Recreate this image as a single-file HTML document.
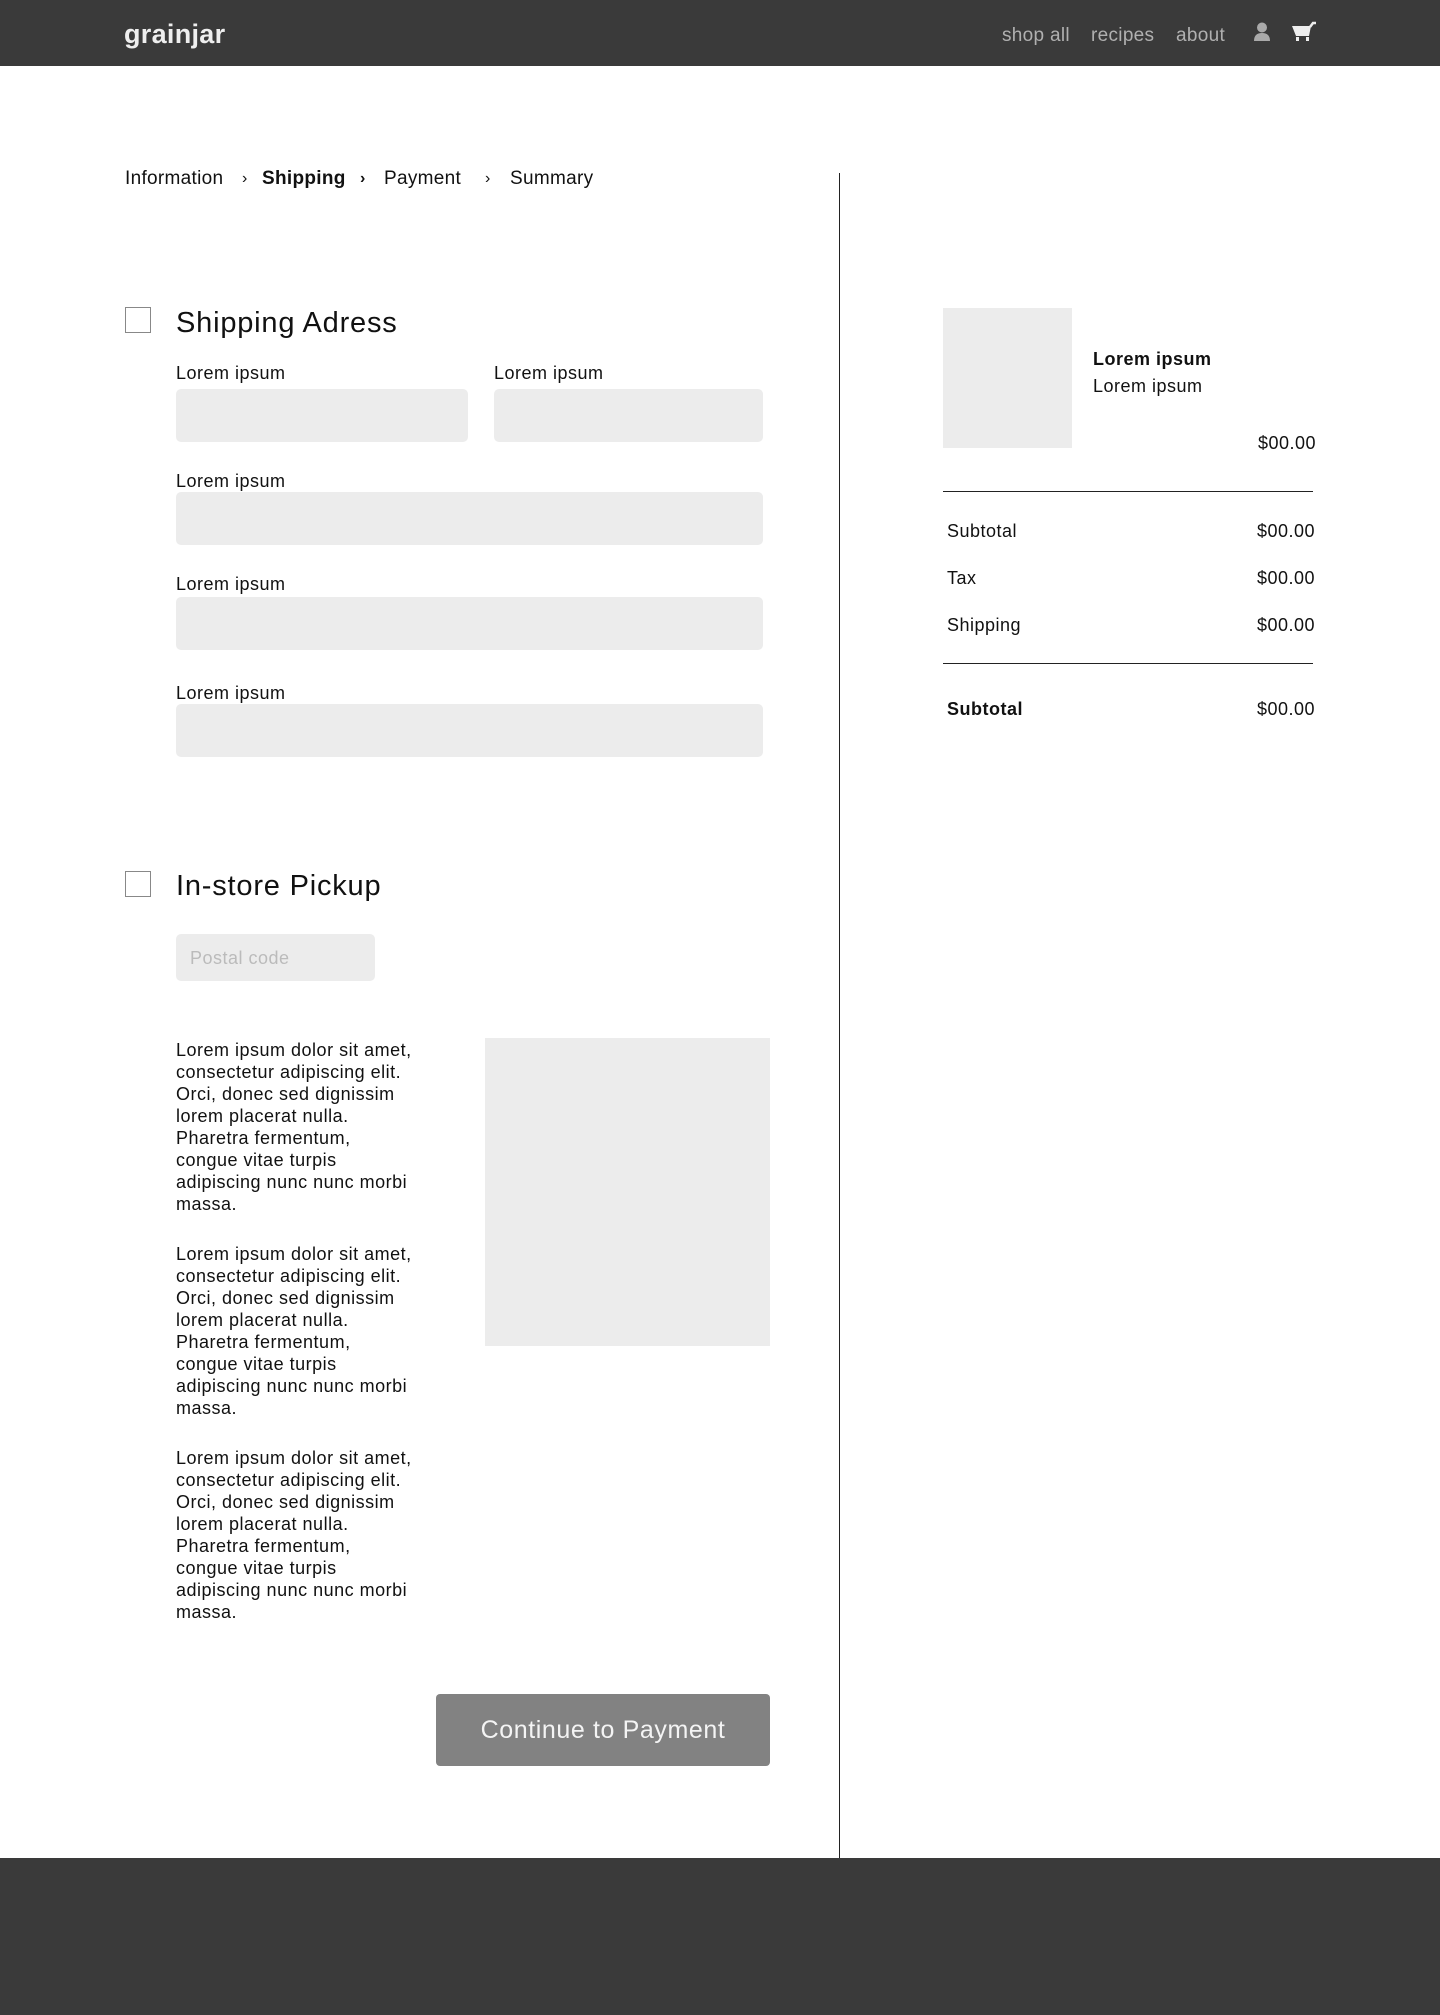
<!DOCTYPE html>
<html><head><meta charset="utf-8"><style>
*{margin:0;padding:0;box-sizing:border-box}
body{width:1440px;height:2015px;position:relative;background:#fff;font-family:"Liberation Sans",sans-serif;color:#111;overflow:hidden}
.a{position:absolute;white-space:nowrap}
.hdr{position:absolute;left:0;top:0;width:1440px;height:66px;background:#3a3a3a}
.nav{color:#b0b0b0;font-size:19px;top:25px;letter-spacing:0.3px}
.inp{position:absolute;background:#ececec;border-radius:5px}
.lbl{font-size:18px;letter-spacing:0.5px}
.cb{position:absolute;width:26px;height:26px;border:1.5px solid #888;background:#fff}
.h2{font-size:29px;color:#111;letter-spacing:0.8px}
.p{position:absolute;left:176px;width:300px;font-size:18px;line-height:22px;white-space:nowrap;letter-spacing:0.5px}
.r{font-size:18px;letter-spacing:0.5px}
.bc{font-size:19px;top:168px;letter-spacing:0.3px}
.ch{font-size:16px;top:170px}
</style></head><body>
<div class="hdr"></div>
<div class="a" style="left:124px;top:19px;color:#eee;font-size:27px;font-weight:bold;letter-spacing:0.3px">grainjar</div>
<div class="a nav" style="left:1002px">shop all</div>
<div class="a nav" style="left:1091px">recipes</div>
<div class="a nav" style="left:1176px">about</div>
<svg class="a" style="left:1253px;top:22px" width="18" height="20" viewBox="0 0 18 20"><circle cx="9" cy="5.5" r="5" fill="#aaa"/><path d="M1 19 Q1 11 9 11 Q17 11 17 19Z" fill="#aaa"/></svg>
<svg class="a" style="left:1291px;top:21px" width="26" height="22" viewBox="0 0 26 22"><path d="M1 5 H20 L18 15 H5 Z" fill="#eee"/><path d="M19 6 L22 2 H25" stroke="#eee" stroke-width="2.5" fill="none"/><rect x="5" y="16" width="3" height="4" fill="#eee"/><rect x="15" y="16" width="3" height="4" fill="#eee"/></svg>

<div class="a bc" style="left:125px">Information</div>
<div class="a ch" style="left:242px">›</div>
<div class="a bc" style="left:262px;font-weight:bold">Shipping</div>
<div class="a ch" style="left:360px;font-weight:bold">›</div>
<div class="a bc" style="left:384px">Payment</div>
<div class="a ch" style="left:485px">›</div>
<div class="a bc" style="left:510px">Summary</div>
<div class="a" style="left:839px;top:173px;width:1px;height:1685px;background:#222"></div>

<div class="cb" style="left:125px;top:307px"></div>
<div class="a h2" style="left:176px;top:307px">Shipping Adress</div>
<div class="a lbl" style="left:176px;top:363px">Lorem ipsum</div>
<div class="a lbl" style="left:494px;top:363px">Lorem ipsum</div>
<div class="inp" style="left:176px;top:389px;width:292px;height:53px"></div>
<div class="inp" style="left:494px;top:389px;width:269px;height:53px"></div>
<div class="a lbl" style="left:176px;top:471px">Lorem ipsum</div>
<div class="inp" style="left:176px;top:492px;width:587px;height:53px"></div>
<div class="a lbl" style="left:176px;top:574px">Lorem ipsum</div>
<div class="inp" style="left:176px;top:597px;width:587px;height:53px"></div>
<div class="a lbl" style="left:176px;top:683px">Lorem ipsum</div>
<div class="inp" style="left:176px;top:704px;width:587px;height:53px"></div>

<div class="cb" style="left:125px;top:871px"></div>
<div class="a h2" style="left:176px;top:870px">In-store Pickup</div>
<div class="inp" style="left:176px;top:934px;width:199px;height:47px"></div>
<div class="a" style="left:190px;top:948px;font-size:18px;color:#bbb;letter-spacing:0.5px">Postal code</div>

<div class="p" style="top:1039px">Lorem ipsum dolor sit amet,<br>consectetur adipiscing elit.<br>Orci, donec sed dignissim<br>lorem placerat nulla.<br>Pharetra fermentum,<br>congue vitae turpis<br>adipiscing nunc nunc morbi<br>massa.</div>
<div class="p" style="top:1243px">Lorem ipsum dolor sit amet,<br>consectetur adipiscing elit.<br>Orci, donec sed dignissim<br>lorem placerat nulla.<br>Pharetra fermentum,<br>congue vitae turpis<br>adipiscing nunc nunc morbi<br>massa.</div>
<div class="p" style="top:1447px">Lorem ipsum dolor sit amet,<br>consectetur adipiscing elit.<br>Orci, donec sed dignissim<br>lorem placerat nulla.<br>Pharetra fermentum,<br>congue vitae turpis<br>adipiscing nunc nunc morbi<br>massa.</div>
<div class="a" style="left:485px;top:1038px;width:285px;height:308px;background:#ececec"></div>

<div class="a" style="left:436px;top:1694px;width:334px;height:72px;background:#828282;border-radius:4px;color:#f4f4f4;font-size:25px;text-align:center;line-height:72px;letter-spacing:0.6px">Continue to Payment</div>

<div class="a" style="left:943px;top:308px;width:129px;height:140px;background:#ececec"></div>
<div class="a r" style="left:1093px;top:349px;font-weight:bold">Lorem ipsum</div>
<div class="a r" style="left:1093px;top:376px">Lorem ipsum</div>
<div class="a r" style="right:124px;top:433px">$00.00</div>
<div class="a" style="left:943px;top:491px;width:370px;height:1px;background:#222"></div>
<div class="a r" style="left:947px;top:521px">Subtotal</div><div class="a r" style="right:125px;top:521px">$00.00</div>
<div class="a r" style="left:947px;top:568px">Tax</div><div class="a r" style="right:125px;top:568px">$00.00</div>
<div class="a r" style="left:947px;top:615px">Shipping</div><div class="a r" style="right:125px;top:615px">$00.00</div>
<div class="a" style="left:943px;top:663px;width:370px;height:1px;background:#222"></div>
<div class="a r" style="left:947px;top:699px;font-weight:bold">Subtotal</div><div class="a r" style="right:125px;top:699px">$00.00</div>

<div class="a" style="left:0;top:1858px;width:1440px;height:157px;background:#3a3a3a"></div>
</body></html>
